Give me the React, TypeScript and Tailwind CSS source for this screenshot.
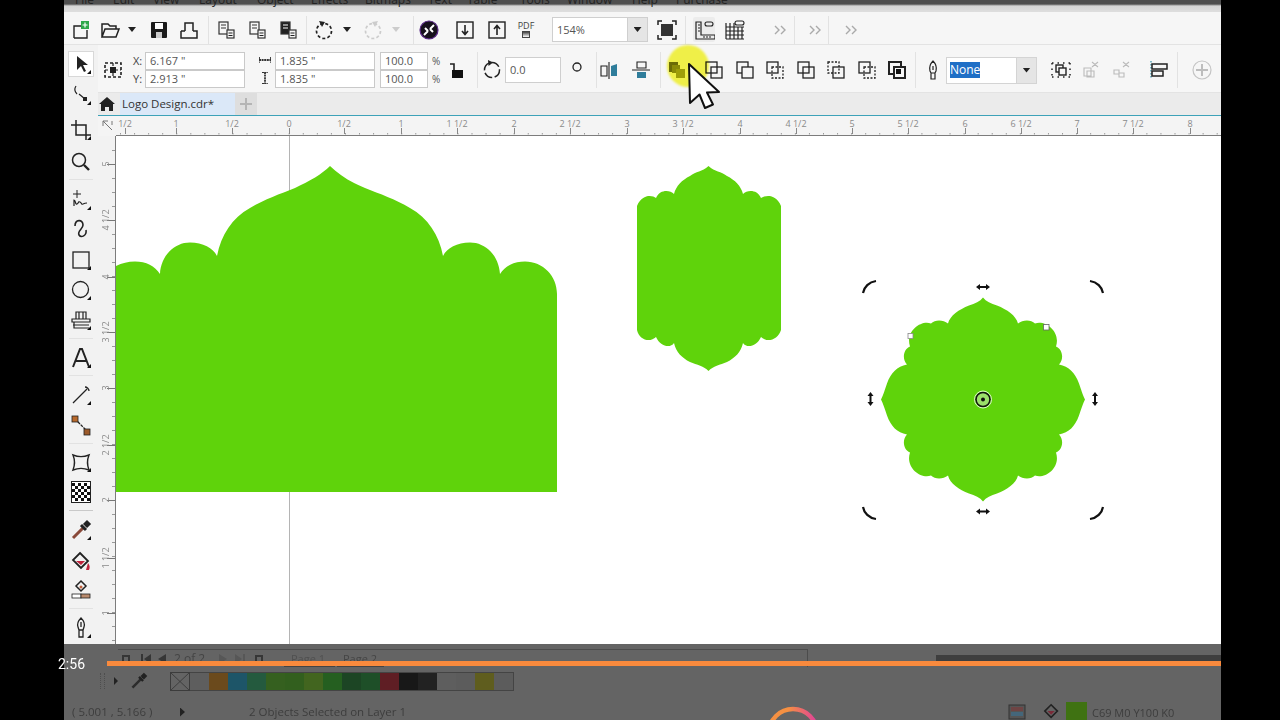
import React from "react";

const GREEN = "#5fd30b";

// small icon box, every toolbar glyph is drawn on the same 22x22 grid
function I({ c = "", children }: { c?: string; children: React.ReactNode }) {
  return (
    <svg viewBox="0 0 22 22" fill="none" stroke="#222" strokeWidth={1.4} className={`w-[22px] h-[22px] shrink-0 ${c}`}>
      {children}
    </svg>
  );
}

const Corner = () => <polygon points="21,17 21,21 17,21" fill="#111" stroke="none" />;

function Sep({ c = "", h = "h-[28px]" }: { c?: string; h?: string }) {
  return <div className={`w-px shrink-0 bg-[#e2e2e2] ${h} ${c}`} />;
}

function Drop({ c = "" }: { c?: string }) {
  return <div className={`w-[8px] h-[5px] shrink-0 bg-[#222] [clip-path:polygon(0_0,100%_0,50%_100%)] ${c}`} />;
}

function Chevrons({ c = "" }: { c?: string }) {
  return (
    <I c={c}>
      <path d="M6 7l4 4-4 4M12 7l4 4-4 4" stroke="#aaa" />
    </I>
  );
}

function DocIcon({ c = "", fill = "none" }: { c?: string; fill?: string }) {
  return (
    <I c={c}>
      <rect x="4" y="3" width="9" height="12" fill={fill} stroke="#333" strokeWidth={1.2} />
      <path d="M6 6h5M6 9h5" stroke={fill === "none" ? "#333" : "#fff"} strokeWidth={1} />
      <rect x="12" y="11" width="7" height="8" fill="#f5f5f5" stroke="#333" strokeWidth={1.2} />
      <path d="M13.5 14h4M13.5 16.5h4" strokeWidth={1} />
    </I>
  );
}

function Overlap({ c = "", a = "none", b = "none", dashA = false, dashB = false, sw = 1.3 }: { c?: string; a?: string; b?: string; dashA?: boolean; dashB?: boolean; sw?: number }) {
  return (
    <I c={c}>
      <rect x="3" y="3" width="11" height="11" fill={a} strokeWidth={sw} strokeDasharray={dashA ? "2 1.5" : undefined} />
      <rect x="8" y="8" width="11" height="11" fill={b} strokeWidth={sw} strokeDasharray={dashB ? "2 1.5" : undefined} />
    </I>
  );
}

function Field({ v, c = "" }: { v: string; c?: string }) {
  return (
    <div className={`h-[18px] bg-white border border-[#c9c9c9] pl-[4px] text-[11px] leading-[16px] text-[#555] ${c}`}>{v}</div>
  );
}

function MenuBar() {
  const items = [
    ["File", "w-[38px]"],
    ["Edit", "w-[40px]"],
    ["View", "w-[46px]"],
    ["Layout", "w-[58px]"],
    ["Object", "w-[54px]"],
    ["Effects", "w-[54px]"],
    ["Bitmaps", "w-[63px]"],
    ["Text", "w-[39px]"],
    ["Table", "w-[53px]"],
    ["Tools", "w-[47px]"],
    ["Window", "w-[65px]"],
    ["Help", "w-[44px]"],
    ["Purchase", "w-[60px]"],
  ];
  return (
    <div className="h-[12px] shrink-0 overflow-hidden pl-[11px] bg-[linear-gradient(#4f4f4f_0,#4f4f4f_4px,#d6d6d6_6px,#dedede_100%)]">
      <div className="flex -mt-[8px] text-[12px] leading-[16px] text-[#222]">
        {items.map(([t, w]) => (
          <span key={t} className={`shrink-0 ${w}`}>
            {t}
          </span>
        ))}
      </div>
    </div>
  );
}

function TopToolbar() {
  return (
    <div className="h-[33px] shrink-0 flex items-center bg-[#f6f6f6] border-b border-[#e3e3e3] pt-[3px]">
      <I c="ml-[6px]">
        <path d="M4 19V7h7M17 11v8H4" />
        <rect x="11" y="2" width="8" height="8" fill="#2fa84a" stroke="none" />
        <path d="M15 3.5v5M12.5 6h5" stroke="#fff" strokeWidth={1.2} />
      </I>
      <I c="ml-[7px]">
        <path d="M3 18V5h6l2 2h6v3M3 18l3-8h14l-3 8z" strokeWidth={1.5} />
      </I>
      <Drop c="ml-[7px]" />
      <I c="ml-[12px]">
        <rect x="3" y="3" width="16" height="16" rx="1" fill="#1b1b1b" stroke="none" />
        <rect x="7" y="4" width="8" height="6" fill="#fff" stroke="none" />
        <rect x="8" y="13" width="6" height="6" fill="#ccc" stroke="none" />
      </I>
      <I c="ml-[8px]">
        <path d="M7 12V4h8v8M3 12h4M15 12h4v7H3v-7" strokeWidth={1.5} />
      </I>
      <Sep c="ml-[8px]" />
      <DocIcon c="ml-[6px]" />
      <DocIcon c="ml-[9px]" />
      <DocIcon c="ml-[9px]" fill="#222" />
      <Sep c="ml-[7px]" />
      <I c="ml-[6px]">
        <circle cx="11" cy="12" r="7.5" strokeDasharray="3 2.2" strokeWidth={1.7} />
        <polygon points="6,2 12,3 9,8" fill="#222" stroke="none" />
      </I>
      <Drop c="ml-[8px]" />
      <I c="ml-[11px]">
        <circle cx="11" cy="12" r="7.5" strokeDasharray="3 2.2" stroke="#ccc" strokeWidth={1.7} />
        <polygon points="16,2 10,3 13,8" fill="#ccc" stroke="none" />
      </I>
      <div className="ml-[8px] w-[8px] h-[5px] shrink-0 bg-[#ccc] [clip-path:polygon(0_0,100%_0,50%_100%)]" />
      <Sep c="ml-[13px]" />
      <I c="ml-[4px]">
        <circle cx="11" cy="11" r="9" fill="#16101c" stroke="#5a2a86" strokeWidth={1.2} />
        <path d="M6 16l4-4M16 6l-4 4M7 9l3 3M15 13l-3-3" stroke="#fff" strokeWidth={2} />
      </I>
      <I c="ml-[14px]">
        <rect x="3" y="3" width="16" height="16" />
        <path d="M11 6v9M8 12l3 3.5 3-3.5" strokeWidth={1.6} />
      </I>
      <I c="ml-[10px]">
        <rect x="3" y="3" width="16" height="16" />
        <path d="M11 16V7M8 10l3-3.5 3 3.5" strokeWidth={1.6} />
      </I>
      <div className="ml-[7px] w-[22px] shrink-0 text-[9px] leading-[9px] text-[#444] text-center">
        PDF
        <div className="mx-auto mt-[1px] w-[8px] h-[7px] border border-[#444] bg-[linear-gradient(#444,#fff)]" />
      </div>
      <div className="ml-[15px] w-[96px] h-[25px] shrink-0 flex bg-white border border-[#cfcfcf]">
        <span className="flex-1 pl-[4px] text-[11px] leading-[23px] text-[#555]">154%</span>
        <div className="w-[20px] flex items-center justify-center bg-[#e5e5e5] border-l border-[#cfcfcf]">
          <Drop />
        </div>
      </div>
      <I c="ml-[8px]">
        <rect x="5" y="5" width="12" height="12" fill="#333" stroke="none" />
        <path d="M2 6V2h4M16 2h4v4M20 16v4h-4M6 20H2v-4" strokeWidth={1.5} />
      </I>
      <Sep c="ml-[7px]" />
      <div className="ml-[7px] w-[22px] h-[25px] shrink-0 flex items-center bg-[#ececec] rounded-[2px]">
        <I>
          <path d="M3 3h5v13h14v4H3z" strokeWidth={1.2} />
          <path d="M5 6h2M5 9h2M5 12h2M11 17v2M14 17v2M17 17v2" strokeWidth={1} />
          <rect x="12" y="3" width="8" height="4" rx="2" strokeWidth={1.1} />
        </I>
      </div>
      <I c="ml-[9px]">
        <path d="M2 8h18M2 12h18M2 16h18M2 20h18M2 4v16M6 4v16M10 4v16M14 8v12M18 8v12" strokeWidth={1.2} />
        <rect x="11" y="2" width="9" height="4" rx="2" strokeWidth={1.1} />
      </I>
      <Chevrons c="ml-[23px]" />
      <Sep c="ml-[3px]" />
      <Chevrons c="ml-[9px]" />
      <Sep c="ml-[2px]" />
      <Chevrons c="ml-[11px]" />
    </div>
  );
}

function PropertyBar() {
  return (
    <div className="h-[48px] shrink-0 flex items-center bg-[#f6f6f6] border-b border-[#e3e3e3] pt-[3px]">
      <I c="ml-[4px]">
        <path d="M3 4h16v14H3z" strokeDasharray="3 2" strokeWidth={1.6} />
        <rect x="8" y="8" width="6" height="6" fill="#222" stroke="none" />
        <path d="M3 11h16M11 4v14" strokeWidth={1.2} strokeDasharray="3 2" />
      </I>
      <div className="w-[121px] shrink-0 flex flex-col">
        <div className="flex">
          <span className="w-[21px] pl-[9px] text-[11px] leading-[18px] text-[#444]">X:</span>
          <Field v={'6.167 "'} c="w-[100px]" />
        </div>
        <div className="flex">
          <span className="w-[21px] pl-[9px] text-[11px] leading-[18px] text-[#444]">Y:</span>
          <Field v={'2.913 "'} c="w-[100px]" />
        </div>
      </div>
      <div className="ml-[10px] w-[20px] shrink-0 flex flex-col items-center gap-[8px]">
        <svg viewBox="0 0 12 8" className="w-[12px] h-[8px]">
          <path d="M0 1v6M12 1v6M0 4h12" stroke="#333" strokeWidth={1.8} strokeDasharray="2 .6" />
        </svg>
        <svg viewBox="0 0 8 12" className="w-[8px] h-[12px]">
          <path d="M1 0h6M1 12h6M4 0v12" stroke="#333" strokeWidth={1.8} strokeDasharray="2 .6" />
        </svg>
      </div>
      <div className="w-[100px] shrink-0 flex flex-col">
        <Field v={'1.835 "'} />
        <Field v={'1.835 "'} />
      </div>
      <div className="ml-[5px] w-[48px] shrink-0 flex flex-col">
        <Field v="100.0" />
        <Field v="100.0" />
      </div>
      <div className="w-[14px] pl-[4px] shrink-0 flex flex-col text-[10px] leading-[18px] text-[#555]">
        <span>%</span>
        <span>%</span>
      </div>
      <I c="ml-[4px]">
        <rect x="6" y="11" width="11" height="8" fill="#111" stroke="none" />
        <path d="M8 11V5h-4" strokeWidth={1.6} />
      </I>
      <Sep c="ml-[9px]" h="h-[36px]" />
      <I c="ml-[3px]">
        <circle cx="11" cy="11" r="7.5" strokeDasharray="9 2.5" strokeWidth={1.5} />
        <polygon points="7,1 12,3.5 7.5,7" fill="#222" stroke="none" />
      </I>
      <div className="ml-[2px] w-[56px] h-[26px] shrink-0 bg-white border border-[#cfcfcf] pl-[4px] text-[11px] leading-[24px] text-[#555]">0.0</div>
      <I c="ml-[5px] -mt-[6px]">
        <circle cx="11" cy="11" r="4" strokeWidth={1.3} />
      </I>
      <Sep c="ml-[8px]" h="h-[36px]" />
      <I c="ml-[1px]">
        <path d="M3 7h6v10H3zM11 3v17" strokeWidth={1.1} />
        <path d="M13 17V7l6-2v12z" fill="#2f7d9b" stroke="none" />
      </I>
      <I c="ml-[10px]">
        <path d="M7 3h9v6H7zM2 11h18" strokeWidth={1.1} />
        <path d="M7 13h9v6H7z" fill="#2f7d9b" stroke="none" />
      </I>
      <Sep c="ml-[8px]" h="h-[36px]" />
      <I c="ml-[5px]">
        <path d="M3 3h9v3H6v7H3z" fill="#6f6f14" stroke="none" />
        <rect x="6" y="6" width="8" height="8" fill="#8f8f18" stroke="none" />
        <rect x="10" y="10" width="9" height="9" fill="#a3a31c" stroke="none" />
      </I>
      <Overlap c="ml-[15px]" />
      <Overlap c="ml-[9px]" b="#f6f6f6" />
      <Overlap c="ml-[8px]" a="#f6f6f6" dashB />
      <Overlap c="ml-[9px]" />
      <Overlap c="ml-[8px]" dashA />
      <Overlap c="ml-[9px]" dashB a="#f6f6f6" />
      <I c="ml-[8px]">
        <rect x="3" y="3" width="12" height="12" fill="#f6f6f6" strokeWidth={2} />
        <rect x="8" y="8" width="11" height="11" fill="#f6f6f6" strokeWidth={2} />
        <rect x="10" y="10" width="5" height="5" fill="#111" stroke="none" />
      </I>
      <Sep c="ml-[7px]" h="h-[36px]" />
      <I c="ml-[6px]">
        <path d="M11 2c3 3 4 6 3 10l-1 2H9l-1-2c-1-4 0-7 3-10zM11 7v4M9 14h4v6H9z" strokeWidth={1.2} />
      </I>
      <div className="ml-[2px] w-[91px] h-[27px] shrink-0 flex bg-white border border-[#d4d4d4]">
        <div className="flex-1 pl-[3px] pt-[4px]">
          <span className="block w-[30px] h-[16px] bg-[#1f6fc6] text-white text-[12px] leading-[16px]">None</span>
        </div>
        <div className="w-[20px] flex items-center justify-center bg-[#e5e5e5] border-l border-[#d4d4d4]">
          <Drop />
        </div>
      </div>
      <I c="ml-[13px]">
        <path d="M2 4h18M2 18h18M2 4v14M20 4v14" strokeDasharray="1.5 4" strokeWidth={1.5} />
        <rect x="6" y="6" width="7" height="7" />
        <rect x="9" y="9" width="7" height="7" fill="#f6f6f6" />
      </I>
      <I c="ml-[8px]">
        <path d="M4 9h7v8H4zM7 12h7v6H7zM12 8l6-5M12 3l6 5" stroke="#bbb" strokeWidth={1.1} />
      </I>
      <I c="ml-[9px]">
        <path d="M3 11h5v4H3zM8 14h5v4H8zM12 8l6-5M12 3l6 5" stroke="#bbb" strokeWidth={1.1} />
      </I>
      <I c="ml-[15px]">
        <path d="M3 2v18" stroke="#2f8fa8" strokeWidth={1.2} strokeDasharray="1.5 1.5" />
        <rect x="4" y="5" width="15" height="5" strokeWidth={1.5} />
        <rect x="4" y="12" width="11" height="5" strokeWidth={1.5} />
      </I>
      <Sep c="ml-[7px]" h="h-[36px]" />
      <I c="ml-[13px]">
        <circle cx="11" cy="11" r="9" stroke="#c4c4c4" strokeWidth={1.2} />
        <path d="M11 5v12M5 11h12" stroke="#bdbdbd" strokeWidth={2} />
      </I>
    </div>
  );
}

function TabBar() {
  return (
    <div className="h-[23px] shrink-0 flex items-stretch bg-[#ebebeb] border-b border-[#3da2b8]">
      <svg viewBox="0 0 16 16" className="ml-[1px] w-[16px] h-[16px] mt-[3px] shrink-0">
        <path d="M8 1L0 8h2v7h4v-4h4v4h4V8h2z" fill="#222" />
      </svg>
      <div className="ml-[5px] w-[115px] shrink-0 bg-[#dbe8f8] pl-[2px] text-[11.5px] leading-[22px] text-[#333]">Logo Design.cdr*</div>
      <div className="w-[22px] shrink-0 flex items-center justify-center bg-[#dedede] text-[#b5b5b5]">
        <svg viewBox="0 0 12 12" className="w-[12px] h-[12px]">
          <path d="M6 0v12M0 6h12" stroke="currentColor" strokeWidth={2} />
        </svg>
      </div>
    </div>
  );
}

const hLabels: [string, number][] = [
  ["1/2", 125], ["1", 176], ["1/2", 232], ["0", 289], ["1/2", 344], ["1", 401], ["1 1/2", 457], ["2", 514],
  ["2 1/2", 570], ["3", 627], ["3 1/2", 683], ["4", 740], ["4 1/2", 796], ["5", 852], ["5 1/2", 908], ["6", 965],
  ["6 1/2", 1021], ["7", 1077], ["7 1/2", 1133], ["8", 1190],
];

function HRuler() {
  const minor: number[] = [];
  for (let x = 120; x < 1221; x += 14.06) minor.push(x);
  return (
    <svg viewBox="98 116 1123 20" className="block w-full h-[20px] shrink-0 bg-[#f4f4f4]">
      <path d="M103 121l9 9M103 121h5M103 121v5M112 121v4" stroke="#777" strokeWidth={1} fill="none" />
      {minor.map((x) => (
        <rect key={x} x={x} y={133} width={1} height={1.5} fill="#999" />
      ))}
      {hLabels.map(([t, x]) => (
        <g key={x}>
          <rect x={x} y={128} width={1} height={6} fill="#888" />
          <text x={x} y={127} textAnchor="middle" fontSize={9} fill="#8a8a8a" fontFamily="'Open Sans', sans-serif">
            {t}
          </text>
        </g>
      ))}
      <rect x={116} y={135} width={1105} height={1} fill="#7c7c7c" />
    </svg>
  );
}

const vLabels: [string, number][] = [
  ["5", 164], ["4 1/2", 220], ["4", 277], ["3 1/2", 332], ["3", 388], ["2 1/2", 445], ["2", 500], ["1 1/2", 558], ["1", 613],
];

function VRuler() {
  const minor: number[] = [];
  for (let y = 150; y < 644; y += 14) minor.push(y);
  return (
    <svg viewBox="98 136 18 508" className="block w-[18px] h-full shrink-0 bg-[#f2f2f2]">
      {minor.map((y) => (
        <rect key={y} x={112} y={y} width={3} height={1} fill="#999" />
      ))}
      {vLabels.map(([t, y]) => (
        <g key={y}>
          <rect x={107} y={y} width={8} height={1} fill="#777" />
          <text x={106} y={y + 3} textAnchor="middle" fontSize={9} fill="#8a8a8a" fontFamily="'Open Sans', sans-serif" transform={`rotate(-90 106 ${y})`}>
            {t}
          </text>
        </g>
      ))}
      <rect x={115} y={136} width={1} height={508} fill="#7c7c7c" />
    </svg>
  );
}

const flower =
  "M0 -102 C3 -98 8 -96 14 -94 C24 -90 33 -84 35 -76 C40 -80 48 -80 52 -76 C62 -80 78 -68 73 -53 C80 -50 81 -40 76 -35 C86 -33 92 -27 96 -16 C98 -10 100 -4 102 0 " +
  "C100 4 98 10 96 16 C92 27 86 33 76 35 C81 40 80 50 73 53 C78 68 62 80 52 76 C48 80 40 80 35 76 C33 84 24 90 14 94 C8 96 3 98 0 102 " +
  "C-3 98 -8 96 -14 94 C-24 90 -33 84 -35 76 C-40 80 -48 80 -52 76 C-62 80 -78 68 -73 53 C-80 50 -81 40 -76 35 C-86 33 -92 27 -96 16 C-98 10 -100 4 -102 0 " +
  "C-100 -4 -98 -10 -96 -16 C-92 -27 -86 -33 -76 -35 C-81 -40 -80 -50 -73 -53 C-78 -68 -62 -80 -52 -76 C-48 -80 -40 -80 -35 -76 C-33 -84 -24 -90 -14 -94 C-8 -96 -3 -98 0 -102 Z";

function Canvas() {
  return (
    <div className="flex-1 min-w-0 bg-white">
      <svg viewBox="116 136 1105 508" className="block w-full h-full">
        <rect x={289} y={136} width={1} height={508} fill="#b4b4b4" />
        <path
          d="M116 492V266C122 263 128 261.5 135 261.5C146 261.5 155 266 160 274C161 256 174 242.5 190 242.5C203 242.5 213 248 217 256C221 235 232 218 250 208C265 199 280 194 295 188C310 181 322 174 330 166C338 174 350 182 365 188C380 194 395 199 410 208C428 218 439 235 443 256C447 248 457 242.5 470 242.5C486 242.5 499 256 500 274C505 266 514 261.5 525 261.5C543 261.5 557 276 557 294V492Z"
          fill={GREEN}
        />
        <path
          d="M708.5 166C702 172 696 171 690 176C682 180 676 186 674 194C670 190 660 189 656 198C652 195 642 194 637 206V330C639 340 650 343 656 337C660 346 670 349 674 343C676 352 682 358 690 362C697 365 704 366 708.5 371C713 366 720 365 727 362C735 358 741 352 743 343C747 349 757 346 761 337C767 343 778 340 781 330V206C776 194 766 195 761 198C757 189 747 190 743 194C741 186 735 180 727 176C721 171 715 172 708.5 166Z"
          fill={GREEN}
        />
        <g transform="translate(983 399.5)">
          <path d={flower} fill={GREEN} />
          <circle r={7} fill="#9be06a" stroke="#111" strokeWidth={1.6} />
          <circle r={8.5} fill="none" stroke="#fff" strokeWidth={0.8} />
          <circle r={2} fill="#111" />
        </g>
        <rect x={908} y={333.5} width={5} height={5} fill="#fff" stroke="#888" strokeWidth={0.8} />
        <rect x={1043.5} y={324.5} width={5.5} height={5.5} fill="#fff" stroke="#666" strokeWidth={0.8} />
        <g fill="none" stroke="#111" strokeWidth={2.2}>
          <path d="M863 293C864 287 869 282 876 281" />
          <path d="M1103 293C1102 287 1097 282 1090 281" />
          <path d="M863 507C864 513 869 518 876 519" />
          <path d="M1103 507C1102 513 1097 518 1090 519" />
        </g>
        <g fill="#111">
          <path d="M976 287l4-3v2h6v-2l4 3-4 3v-2h-6v2z" />
          <path d="M976 511.5l4-3v2h6v-2l4 3-4 3v-2h-6v2z" />
          <path d="M870.5 392l3 4h-2v6h2l-3 4-3-4h2v-6h-2z" />
          <path d="M1095 392l3 4h-2v6h2l-3 4-3-4h2v-6h-2z" />
        </g>
      </svg>
    </div>
  );
}

function Toolbox() {
  return (
    <div className="w-[34px] shrink-0 flex flex-col items-center bg-[#f2f2f2]">
      <div className="mt-[6px] w-[26px] h-[26px] shrink-0 flex items-center justify-center bg-white border border-[#d8d8d8]">
        <I>
          <path d="M7 3v14l4-4 3 6 2-1-3-6h5z" fill="#222" stroke="none" />
          <Corner />
        </I>
      </div>
      <I c="mt-[7px]">
        <path d="M6 2c-2 3-1 6 1 8" strokeWidth={1.2} />
        <path d="M9 10l6 5" strokeWidth={1.2} />
        <rect x="13" y="13" width="4" height="4" fill="#222" stroke="none" />
        <Corner />
      </I>
      <I c="mt-[13px]">
        <path d="M6 1v15h15M1 6h15v15" strokeWidth={1.5} />
        <Corner />
      </I>
      <I c="mt-[10px]">
        <circle cx="9" cy="9" r="6.5" strokeWidth={1.5} />
        <path d="M14 14l5 5" strokeWidth={2.4} />
      </I>
      <Sep c="mt-[6px] !w-[24px] !h-px" h="" />
      <I c="mt-[9px]">
        <path d="M7 1v8M3 5h8" strokeWidth={1} />
        <path d="M4 17V11c2 0 1 5 3 4s1-3 3-2 1 3 3 2 2-1 4-1" strokeWidth={1.2} />
        <Corner />
      </I>
      <I c="mt-[7px]">
        <path d="M5 8c0-7 8-7 8-1 0 4-6 6-4 10 2 3 8 1 7-5" strokeWidth={1.6} />
      </I>
      <I c="mt-[9px]">
        <rect x="3" y="3" width="16" height="16" strokeWidth={1.3} />
        <Corner />
      </I>
      <I c="mt-[8px]">
        <circle cx="10.5" cy="10.5" r="8" strokeWidth={1.3} />
        <Corner />
      </I>
      <I c="mt-[8px]">
        <path d="M6 3h10v7H6zM9 3v7M13 3v7M2 10h18v3H2zM4 13v6h15M3 16h16" strokeWidth={1.2} />
        <Corner />
      </I>
      <Sep c="mt-[7px] !w-[24px] !h-px" h="" />
      <I c="mt-[8px]">
        <path d="M3 20L10 2h2l7 18M6 14h10" strokeWidth={2} />
        <Corner />
      </I>
      <Sep c="mt-[6px] !w-[24px] !h-px" h="" />
      <I c="mt-[8px]">
        <path d="M3 19L17 5M15 3c2 0 4 2 4 4" strokeWidth={1.3} />
        <Corner />
      </I>
      <I c="mt-[9px]">
        <path d="M5 4l13 13" strokeWidth={1.3} strokeDasharray="3 1" />
        <rect x="2" y="1" width="6" height="6" fill="#b8692c" stroke="#222" strokeWidth={0.8} />
        <rect x="14" y="14" width="6" height="6" fill="#9c5a2a" stroke="#222" strokeWidth={0.8} />
      </I>
      <Sep c="mt-[6px] !w-[24px] !h-px" h="" />
      <I c="mt-[7px]">
        <path d="M3 4c5 2 11 2 16 0-2 5-2 10 0 15-5-2-11-2-16 0 2-5 2-10 0-15z" strokeWidth={1.4} />
        <Corner />
      </I>
      <svg viewBox="0 0 6 6" shapeRendering="crispEdges" className="mt-[8px] w-[20px] h-[22px] shrink-0 bg-white border border-[#222]">
        <path d="M0 0h1v1H0zM2 0h1v1H2zM4 0h1v1H4zM1 1h1v1H1zM3 1h1v1H3zM5 1h1v1H5zM0 2h1v1H0zM2 2h1v1H2zM4 2h1v1H4zM1 3h1v1H1zM3 3h1v1H3zM5 3h1v1H5zM0 4h1v1H0zM2 4h1v1H2zM4 4h1v1H4zM1 5h1v1H1zM3 5h1v1H3zM5 5h1v1H5z" fill="#111" />
      </svg>
      <Sep c="mt-[7px] !w-[24px] !h-px !bg-[#c9c9c9]" h="" />
      <I c="mt-[8px]">
        <path d="M3 19l10-10" stroke="#8a4a3a" strokeWidth={3} />
        <path d="M11 6l5 5M14 6l3-3 2 2-3 3" stroke="#222" strokeWidth={3} />
        <Corner />
      </I>
      <I c="mt-[9px]">
        <path d="M10 3l8 8-7 7-8-8z" strokeWidth={1.8} />
        <path d="M6 11h9l-4 4z" fill="#c0223c" stroke="none" />
        <path d="M18 13c2 2 2 5 1 7h-3z" fill="#c0223c" stroke="none" />
      </I>
      <I c="mt-[7px]">
        <path d="M11 2l5 5-5 5-5-5z" strokeWidth={1.5} />
        <circle cx="11" cy="8" r="1.5" fill="#c0603c" stroke="none" />
        <rect x="2" y="15" width="9" height="4" fill="#fff" strokeWidth={0.8} />
        <rect x="11" y="15" width="9" height="4" fill="#b98a6d" strokeWidth={0.8} />
      </I>
      <Sep c="mt-[7px] !w-[24px] !h-px" h="" />
      <I c="mt-[8px]">
        <path d="M11 1c3 3 4 6 3 9l-1 3H9l-1-3c-1-3 0-6 3-9zM11 5v5M9 13h4v7H9z" strokeWidth={1.3} />
        <Corner />
      </I>
    </div>
  );
}

const swatches = [
  "bg-[#5e5e5e]", "bg-[#6b4a1c]", "bg-[#1d5568]", "bg-[#245a3e]", "bg-[#35601f]", "bg-[#325f1e]", "bg-[#42651f]", "bg-[#255f20]",
  "bg-[#1c4524]", "bg-[#1e4f28]", "bg-[#5f1e24]", "bg-[#181818]", "bg-[#222222]", "bg-[#5e5e5e]", "bg-[#5c5c5c]", "bg-[#5f5d1e]", "bg-[#5c5c5c]",
];

function BottomArea() {
  return (
    <div className="h-[76px] shrink-0 flex flex-col bg-[#646464] text-[#3a3a3a]">
      <div className="h-[22px] shrink-0 flex">
        <div className="ml-[54px] mt-[5px] w-[690px] h-[18px] flex items-center border-t border-r border-[#4c4c4c] text-[11px] text-[#454545]">
          <svg viewBox="0 0 48 10" className="ml-[4px] w-[48px] h-[10px] shrink-0">
            <g fill="#363636">
              <path d="M0 1h8v8H0zM2 3v4h4V3z" />
              <path d="M19 0h2v10h-2zM29 0v10l-7-5zM44 0v10l-8-5z" />
            </g>
          </svg>
          <span className="ml-[4px] w-[44px] shrink-0 text-[12px]">2 of 2</span>
          <svg viewBox="0 0 48 10" className="w-[48px] h-[10px] shrink-0">
            <path d="M1 0v10l8-5zM17 0v10l7-5zM25 0h2v10h-2z" fill="#575757" />
            <path d="M37 1h8v8h-8zM39 3v4h4V3z" fill="#363636" />
          </svg>
          <span className="ml-[18px] w-[51px] h-full shrink-0 pl-[7px] leading-[17px] text-[#505050] border-b border-[#444]">Page 1</span>
          <span className="ml-[2px] w-[47px] h-full shrink-0 pl-[6px] leading-[17px] border-b border-[#444]">Page 2</span>
        </div>
        <div className="ml-[128px] mt-[11px] flex-1 h-[6px] bg-[#3e3e3e]" />
      </div>
      <div className="h-[28px] shrink-0 flex items-start pt-[6px]">
        <div className="ml-[36px] mt-[1px] w-[5px] h-[16px] border-x border-dotted border-[#4e4e4e]" />
        <div className="ml-[9px] mt-[5px] w-[4px] h-[8px] bg-[#222] [clip-path:polygon(0_0,100%_50%,0_100%)]" />
        <svg viewBox="0 0 22 22" className="ml-[12px] w-[18px] h-[18px] shrink-0">
          <path d="M3 19l10-10" stroke="#2c2c2c" strokeWidth={3} />
          <path d="M11 6l5 5M14 6l3-3 2 2-3 3" stroke="#222" strokeWidth={3} />
        </svg>
        <div className="ml-[22px] w-[20px] h-[19px] shrink-0 border border-[#3c3c3c]">
          <svg viewBox="0 0 19 18" className="block w-full h-full">
            <path d="M0 0l19 18M19 0L0 18" stroke="#3c3c3c" strokeWidth={1} />
          </svg>
        </div>
        <div className="flex h-[19px] border-y border-r border-[#444]">
          {swatches.map((s, i) => (
            <div key={i} className={`w-[19px] h-full ${s}`} />
          ))}
        </div>
      </div>
      <div className="flex-1 flex items-center justify-between text-[11.5px] text-[#3d3d3d] pt-[8px]">
        <div className="flex items-center">
          <span className="ml-[8px] w-[103px] shrink-0">( 5.001 , 5.166 )</span>
          <div className="ml-[5px] w-[5px] h-[9px] bg-[#222] [clip-path:polygon(0_0,100%_50%,0_100%)]" />
          <span className="ml-[64px] shrink-0">2 Objects Selected on Layer 1</span>
        </div>
        <div className="flex items-center h-[20px] mr-[41px] self-end">
          <svg viewBox="0 0 18 18" className="w-[18px] h-[18px] shrink-0">
            <rect x="1" y="2" width="16" height="14" fill="#555" stroke="#333" />
            <rect x="3" y="4" width="12" height="4" fill="#6e4444" />
            <rect x="3" y="9" width="12" height="4" fill="#44667a" />
          </svg>
          <svg viewBox="0 0 20 20" className="ml-[17px] w-[18px] h-[18px] shrink-0">
            <path d="M9 2l7 7-7 7-7-7z" fill="none" stroke="#222" strokeWidth={1.8} />
            <path d="M5 9h8l-4 4z" fill="#7a2a38" />
          </svg>
          <div className="ml-[5px] w-[21px] h-[20px] bg-[#3f7212]" />
          <span className="ml-[5px] mt-[2px] w-[88px] shrink-0 whitespace-nowrap text-[11px]">C69 M0 Y100 K0</span>
        </div>
      </div>
    </div>
  );
}

export default function App() {
  return (
    <div className="relative w-[1280px] h-[720px] overflow-hidden flex bg-black font-['Open_Sans',sans-serif]">
      <div className="w-[64px] shrink-0" />
      <div className="w-[1157px] shrink-0 flex flex-col blur-[0.4px]">
        <MenuBar />
        <TopToolbar />
        <div className="flex-1 min-h-0 flex">
          <Toolbox />
          <div className="flex-1 min-w-0 flex flex-col">
            <PropertyBar />
            <TabBar />
            <HRuler />
            <div className="flex-1 min-h-0 flex">
              <VRuler />
              <Canvas />
            </div>
          </div>
        </div>
        <BottomArea />
      </div>

      {/* video player stuff lying over the recording */}
      <div className="absolute left-[107px] top-[661px] w-[1114px] h-[5px] bg-[#f98a3d]" />
      <span className="absolute left-[58px] top-[655px] text-[14px] leading-[18px] text-white font-['Roboto',sans-serif]">2:56</span>
      <svg viewBox="0 0 60 60" className="absolute left-[763px] top-[703px] w-[60px] h-[60px]">
        <defs>
          <linearGradient id="ring" x1="0" y1="0" x2="1" y2="0">
            <stop offset="0.4" stopColor="#f59042" />
            <stop offset="1" stopColor="#e0409a" />
          </linearGradient>
        </defs>
        <circle cx="30" cy="30" r="24" fill="none" stroke="url(#ring)" strokeWidth={4.5} />
      </svg>

      {/* presenter's pointer with its yellow halo */}
      <div className="absolute left-[667px] top-[45px] w-[42px] h-[42px] rounded-full bg-[#f8f84a] mix-blend-multiply blur-[1px]" />
      <svg viewBox="680 58 48 56" className="absolute left-[680px] top-[58px] w-[48px] h-[56px]">
        <path d="M689 64L690 103L699.5 94.5L705 108L713 104.5L707 92.5L719 92Z" fill="#fff" stroke="#111" strokeWidth={2} strokeLinejoin="round" />
      </svg>
    </div>
  );
}
